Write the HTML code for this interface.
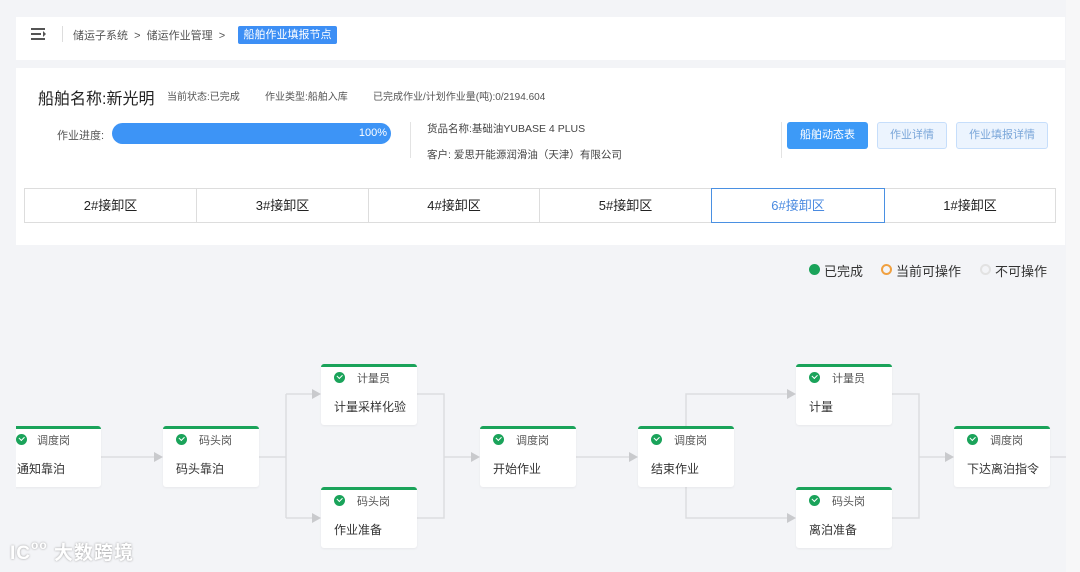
<!DOCTYPE html>
<html><head><meta charset="utf-8"><style>
*{margin:0;padding:0;box-sizing:border-box}
body{width:1080px;height:572px;overflow:hidden;background:#f3f4f7;font-family:"Liberation Sans","Noto Sans CJK SC",sans-serif;position:relative;color:#333}
.a{position:absolute}
.card{background:#fff}
.node{position:absolute;width:96px;height:61px;background:#fff;border-top:3px solid #1aa35a;border-radius:3px;box-shadow:0 1px 2px rgba(0,0,0,.05)}
.node .r{position:absolute;left:36px;top:3px;font-size:11px;color:#555}
.node .ck{position:absolute;left:13px;top:5px;width:11px;height:11px;border-radius:50%;background:#1aa35a}
.node .ck:after{content:"";position:absolute;left:3px;top:2px;width:4px;height:2.5px;border-left:1.5px solid #fff;border-bottom:1.5px solid #fff;transform:rotate(-45deg)}
.node .t{position:absolute;left:13px;top:31px;font-size:12px;color:#333}
.tab{position:absolute;top:188px;height:35px;border:1px solid #ddd;font-size:13px;text-align:center;line-height:33px;color:#222}
</style></head><body>
<div class="a card" style="left:16px;top:17px;width:1049px;height:43px"></div>
<div class="a" style="left:31px;top:28px;width:14px;height:2px;background:#555"></div>
<div class="a" style="left:31px;top:33px;width:10px;height:2px;background:#555"></div>
<div class="a" style="left:31px;top:38px;width:14px;height:2px;background:#555"></div>
<div class="a" style="left:43px;top:31px;width:0;height:0;border-left:3px solid #555;border-top:3px solid transparent;border-bottom:3px solid transparent"></div>
<div class="a" style="left:62px;top:26px;width:1px;height:16px;background:#ddd"></div>
<div class="a" style="left:73px;top:27px;font-size:11px;color:#555">储运子系统 &nbsp;&gt;&nbsp; 储运作业管理 &nbsp;&gt;</div>
<div class="a" style="left:238px;top:26px;width:99px;height:18px;background:#3d8ff5;border-radius:2px;color:#fff;font-size:11px;line-height:18px;text-align:center">船舶作业填报节点</div>

<div class="a card" style="left:16px;top:68px;width:1049px;height:177px"></div>
<div class="a" style="left:38px;top:85px;font-size:16px;color:#222">船舶名称:新光明</div>
<div class="a" style="left:167px;top:88px;font-size:10px;color:#555;word-spacing:0">当前状态:已完成</div>
<div class="a" style="left:265px;top:88px;font-size:10px;color:#555">作业类型:船舶入库</div>
<div class="a" style="left:373px;top:88px;font-size:10px;color:#555">已完成作业/计划作业量(吨):0/2194.604</div>
<div class="a" style="left:57px;top:127px;font-size:11px;color:#555">作业进度:</div>
<div class="a" style="left:112px;top:123px;width:279px;height:21px;border-radius:11px;background:#3d94f6;color:#fff;font-size:11px;line-height:21px;text-align:right;padding-right:4px">100%</div>
<div class="a" style="left:410px;top:122px;width:1px;height:36px;background:#e3e3e3"></div>
<div class="a" style="left:427px;top:121px;font-size:10.5px;color:#444">货品名称:基础油YUBASE 4 PLUS</div>
<div class="a" style="left:427px;top:147px;font-size:10.5px;color:#444">客户: 爱思开能源润滑油（天津）有限公司</div>
<div class="a" style="left:781px;top:122px;width:1px;height:36px;background:#e3e3e3"></div>
<div class="a" style="left:787px;top:122px;width:81px;height:27px;background:#3d9af7;border-radius:3px;color:#fff;font-size:11px;line-height:27px;text-align:center">船舶动态表</div>
<div class="a" style="left:877px;top:122px;width:70px;height:27px;background:#ecf4fe;border:1px solid #c6defb;border-radius:3px;color:#7aa6d9;font-size:11px;line-height:25px;text-align:center">作业详情</div>
<div class="a" style="left:956px;top:122px;width:92px;height:27px;background:#ecf4fe;border:1px solid #c6defb;border-radius:3px;color:#7aa6d9;font-size:11px;line-height:25px;text-align:center">作业填报详情</div>

<div class="tab" style="left:24px;width:173px">2#接卸区</div>
<div class="tab" style="left:196px;width:173px">3#接卸区</div>
<div class="tab" style="left:368px;width:172px">4#接卸区</div>
<div class="tab" style="left:539px;width:173px">5#接卸区</div>
<div class="tab" style="left:884px;width:172px">1#接卸区</div>
<div class="tab" style="left:711px;width:174px;border-color:#4a90e2;color:#4a8ae0">6#接卸区</div>

<div class="a" style="left:1066px;top:0;width:14px;height:572px;background:#f7f7f8"></div>

<div class="a" style="left:809px;top:264px;width:11px;height:11px;border-radius:50%;background:#1aa35a"></div>
<div class="a" style="left:824px;top:261px;font-size:13px;color:#333">已完成</div>
<div class="a" style="left:881px;top:264px;width:11px;height:11px;border-radius:50%;border:2px solid #f0a040"></div>
<div class="a" style="left:896px;top:261px;font-size:13px;color:#333">当前可操作</div>
<div class="a" style="left:980px;top:264px;width:11px;height:11px;border-radius:50%;border:2px solid #e2e2e2"></div>
<div class="a" style="left:995px;top:261px;font-size:13px;color:#333">不可操作</div>

<svg class="a" style="left:0;top:0" width="1080" height="572">
<g stroke="#dcdde0" stroke-width="1.5" fill="none">
<path d="M101 457H156"/><path d="M259 457H286M286 394V518M286 394H314M286 518H314"/>
<path d="M417 394H444V518H417M444 457H473"/><path d="M576 457H631"/>
<path d="M686 426V394H789M686 487V518H789"/>
<path d="M892 394H919V518H892M919 457H947"/><path d="M1050 457H1066"/>
</g>
<g fill="#c9cacd">
<path d="M154 452L163 457L154 462Z"/><path d="M312 389L321 394L312 399Z"/><path d="M312 513L321 518L312 523Z"/>
<path d="M471 452L480 457L471 462Z"/><path d="M629 452L638 457L629 462Z"/>
<path d="M787 389L796 394L787 399Z"/><path d="M787 513L796 518L787 523Z"/><path d="M945 452L954 457L945 462Z"/>
</g></svg>

<div class="node" style="left:5px;top:426px"><div class="ck" style="left:11px"></div><div class="r" style="left:32px">调度岗</div><div class="t" style="left:12px">通知靠泊</div></div>
<div class="a" style="left:0;top:420px;width:16px;height:70px;background:#f3f4f7"></div>
<div class="node" style="left:163px;top:426px"><div class="ck"></div><div class="r">码头岗</div><div class="t">码头靠泊</div></div>
<div class="node" style="left:321px;top:364px"><div class="ck"></div><div class="r">计量员</div><div class="t">计量采样化验</div></div>
<div class="node" style="left:321px;top:487px"><div class="ck"></div><div class="r">码头岗</div><div class="t">作业准备</div></div>
<div class="node" style="left:480px;top:426px"><div class="ck"></div><div class="r">调度岗</div><div class="t">开始作业</div></div>
<div class="node" style="left:638px;top:426px"><div class="ck"></div><div class="r">调度岗</div><div class="t">结束作业</div></div>
<div class="node" style="left:796px;top:364px"><div class="ck"></div><div class="r">计量员</div><div class="t">计量</div></div>
<div class="node" style="left:796px;top:487px"><div class="ck"></div><div class="r">码头岗</div><div class="t">离泊准备</div></div>
<div class="node" style="left:954px;top:426px"><div class="ck"></div><div class="r">调度岗</div><div class="t">下达离泊指令</div></div>

<div class="a" style="left:10px;top:538px;font-size:19px;font-weight:bold;color:#fff;text-shadow:0 0 2px #999;letter-spacing:1px">IC<span style="font-size:12px;vertical-align:top">oo</span> 大数跨境</div>
</body></html>
